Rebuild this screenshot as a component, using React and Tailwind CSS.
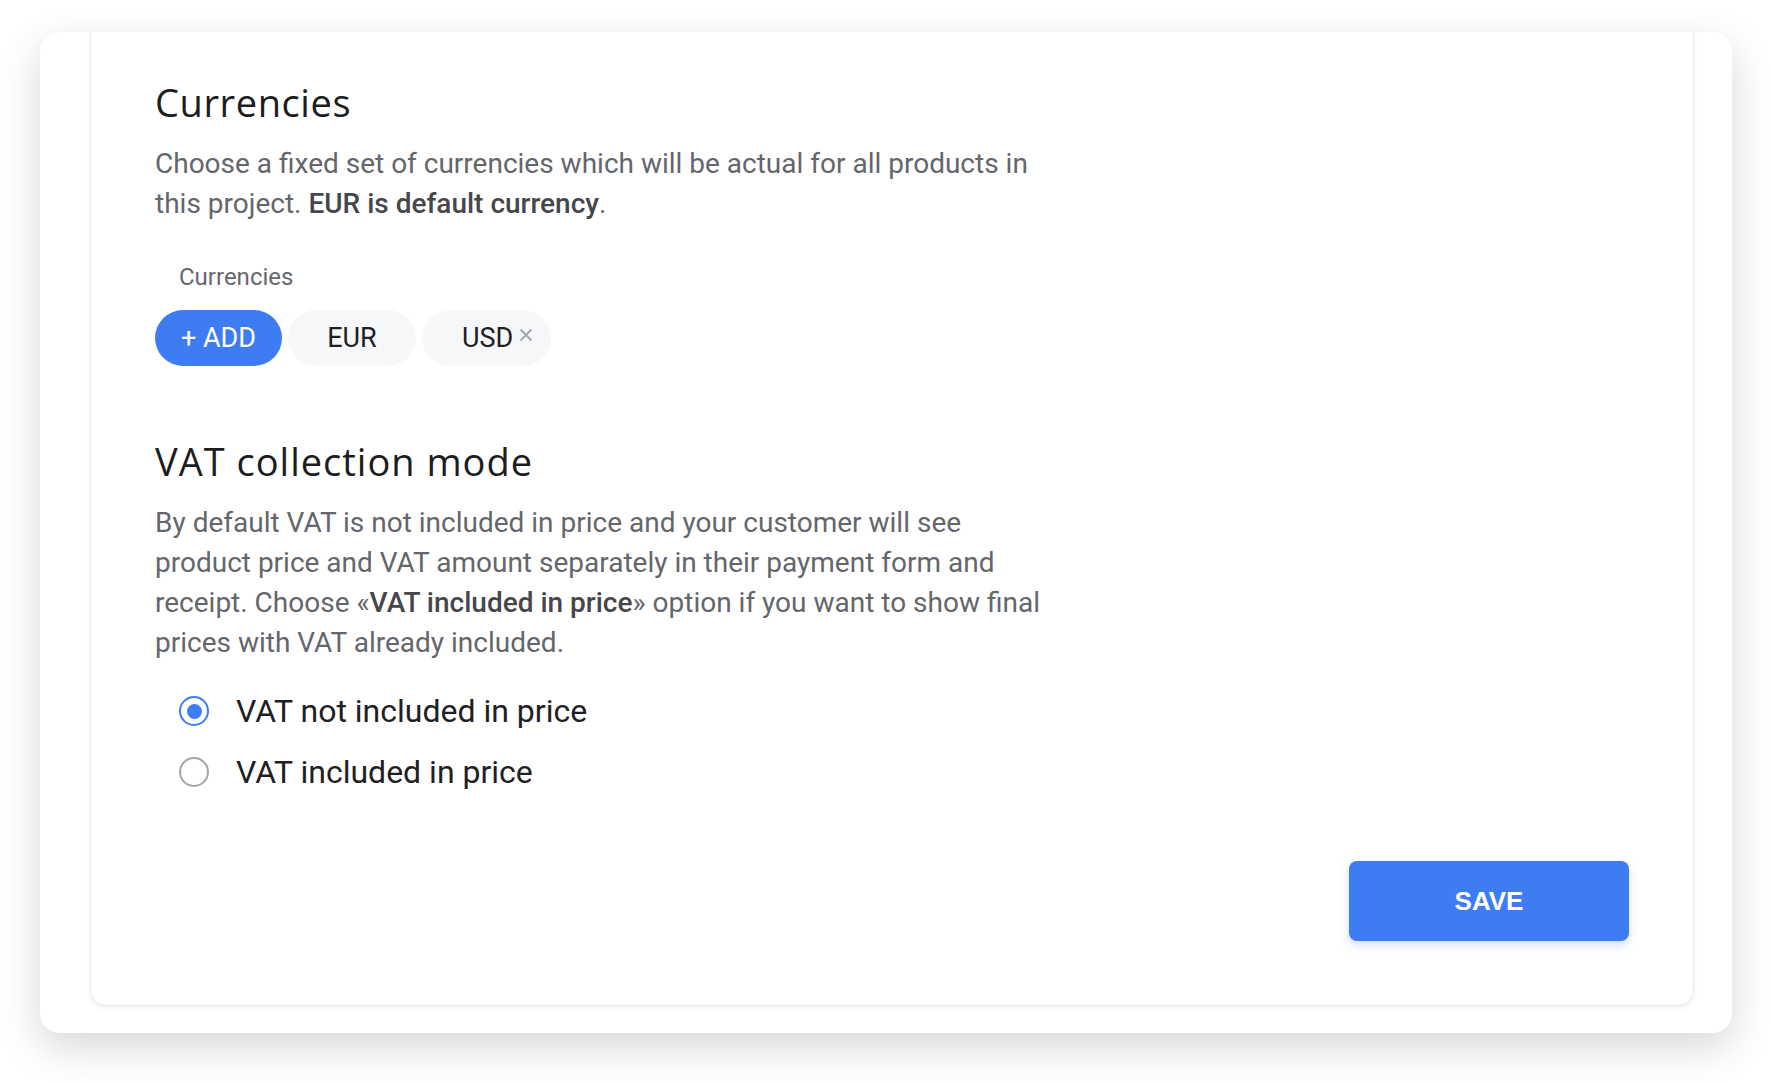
import { useState } from "react";

const body = "font-['Roboto',sans-serif] text-[28px] leading-[40px] text-[#63666b]";

function Radio({ checked, label, onSelect }) {
  return (
    <button type="button" onClick={onSelect} className="flex h-[48px] items-center pl-[24px] text-left">
      <span
        className={
          "flex h-[30px] w-[30px] items-center justify-center rounded-full border-[2.5px] " +
          (checked ? "border-[#3e7cf3]" : "border-[#a3a5a8]")
        }
      >
        {checked && <span className="h-[15px] w-[15px] rounded-full bg-[#3e7cf3]" />}
      </span>
      <span className="ml-[27px] font-['Roboto',sans-serif] text-[32px] text-[#1f2023]">{label}</span>
    </button>
  );
}

export default function App() {
  const [vat, setVat] = useState("not");
  const [currencies, setCurrencies] = useState(["EUR", "USD"]);

  return (
    <div className="min-h-screen bg-white px-[40px] pt-[32px] pb-[49px]">
      <div className="flex h-[1001px] overflow-hidden rounded-[20px] bg-white pr-[38px] pb-[27px] pl-[50px] shadow-[0_14px_40px_rgba(0,0,0,0.16)]">
        <div className="flex flex-1 flex-col rounded-b-[16px] border-x border-b border-[#e7e9ec] pt-[46px] pr-[64px] pb-[64px] pl-[64px] shadow-[0_2px_5px_rgba(0,0,0,0.06)]">
          <h2 className="font-['Open_Sans',sans-serif] text-[38px] leading-[48px] font-normal tracking-[0.6px] text-[#1c1d20]">
            Currencies
          </h2>
          <p className={body + " mt-[18px] w-[900px]"}>
            Choose a fixed set of currencies which will be actual for all products in this project.{" "}
            <span className="font-medium text-[#45474b]">EUR is default currency</span>.
          </p>

          <div className="mt-[39px] pl-[24px] font-['Roboto',sans-serif] text-[24px] leading-[28px] text-[#65686c]">
            Currencies
          </div>
          <div className="mt-[19px] flex h-[56px] gap-[6px] font-['Roboto',sans-serif] text-[27px]">
            <button
              type="button"
              className="flex w-[127px] items-center justify-center rounded-full bg-[#3e7cf3] text-white"
            >
              + ADD
            </button>
            {currencies.map((c) =>
              c === "EUR" ? (
                <span key={c} className="flex w-[128px] items-center justify-center rounded-full bg-[#f6f7f9] text-[#1f2023]">
                  {c}
                </span>
              ) : (
                <span key={c} className="flex w-[129px] items-center rounded-full bg-[#f6f7f9] pl-[40px] text-[#1f2023]">
                  {c}
                  <button
                    type="button"
                    onClick={() => setCurrencies(currencies.filter((x) => x !== c))}
                    className="mb-[6px] ml-[6px] text-[#a5a7aa]"
                  >
                    <svg width="14" height="14" viewBox="0 0 14 14" stroke="currentColor" strokeWidth="1.8">
                      <path d="M1.5 1.5l11 11M12.5 1.5l-11 11" />
                    </svg>
                  </button>
                </span>
              )
            )}
          </div>

          <h2 className="mt-[71px] font-['Open_Sans',sans-serif] text-[38px] leading-[48px] font-normal tracking-[1px] text-[#1c1d20]">
            VAT collection mode
          </h2>
          <p className={body + " mt-[18px] w-[900px]"}>
            By default VAT is not included in price and your customer will see product price and VAT amount
            separately in their payment form and receipt. Choose «
            <span className="font-medium text-[#45474b]">VAT included in price</span>» option if you want to
            show final prices with VAT already included.
          </p>

          <div className="mt-[24px] flex flex-col gap-[13px]">
            <Radio checked={vat === "not"} label="VAT not included in price" onSelect={() => setVat("not")} />
            <Radio checked={vat === "inc"} label="VAT included in price" onSelect={() => setVat("inc")} />
          </div>

          <div className="mt-auto flex justify-end">
            <button
              type="button"
              className="h-[80px] w-[280px] rounded-[8px] bg-[#3e7cf3] font-['Liberation_Sans',sans-serif] text-[26px] font-bold text-white shadow-[0_4px_10px_rgba(62,124,243,0.25)]"
            >
              SAVE
            </button>
          </div>
        </div>
      </div>
    </div>
  );
}
